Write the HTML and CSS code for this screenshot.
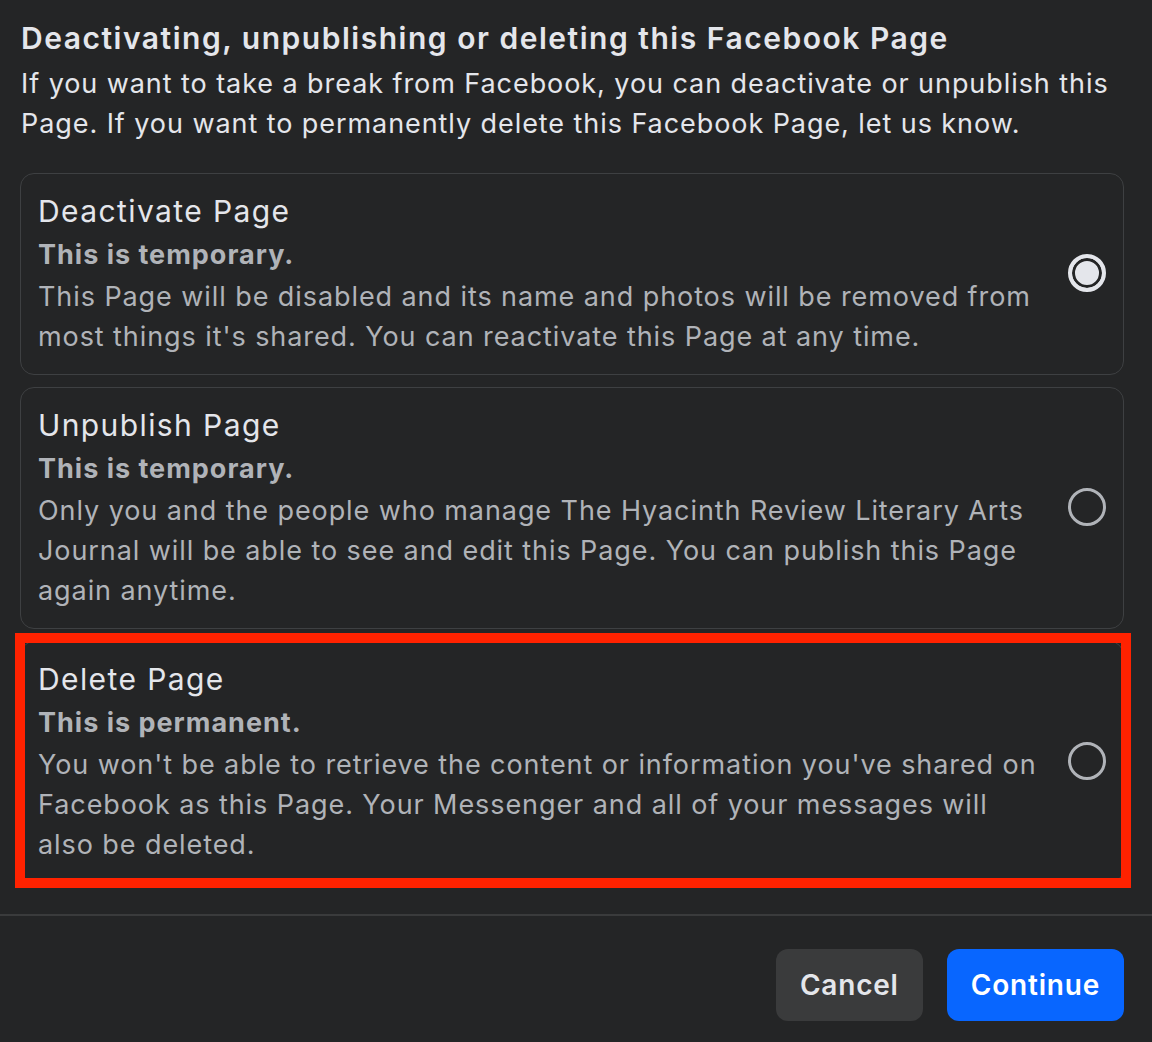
FILE: index.html
```html
<!DOCTYPE html>
<html lang="en">
<head>
<meta charset="utf-8">
<title>Deactivating, unpublishing or deleting this Facebook Page</title>
<link rel="stylesheet" href="styles.css">
</head>
<body>
<div class="dialog">
  <div class="content">
    <h1 class="heading">Deactivating, unpublishing or deleting this Facebook Page</h1>
    <p class="intro">If you want to take a break from Facebook, you can deactivate or unpublish this Page. If you want to permanently delete this Facebook Page, let us know.</p>
    <div class="options">
      <div class="option">
        <div class="option-text">
          <div class="option-title">Deactivate Page</div>
          <div class="option-sub">This is temporary.</div>
          <div class="option-desc">This Page will be disabled and its name and photos will be removed from most things it's shared. You can reactivate this Page at any time.</div>
        </div>
        <span class="radio radio-on"></span>
      </div>
      <div class="option">
        <div class="option-text">
          <div class="option-title">Unpublish Page</div>
          <div class="option-sub">This is temporary.</div>
          <div class="option-desc">Only you and the people who manage The Hyacinth Review Literary Arts Journal will be able to see and edit this Page. You can publish this Page again anytime.</div>
        </div>
        <span class="radio"></span>
      </div>
      <div class="option option-marked">
        <div class="option-text">
          <div class="option-title">Delete Page</div>
          <div class="option-sub">This is permanent.</div>
          <div class="option-desc">You won't be able to retrieve the content or information you've shared on Facebook as this Page. Your Messenger and all of your messages will also be deleted.</div>
        </div>
        <span class="radio"></span>
      </div>
    </div>
  </div>
  <div class="footer">
    <button class="btn btn-cancel">Cancel</button>
    <button class="btn btn-continue">Continue</button>
  </div>
</div>
</body>
</html>
```

FILE: styles.css
```css
html, body {
  margin: 0;
  padding: 0;
  background: #242526;
}
body {
  font-family: Inter, "Open Sans", "Liberation Sans", sans-serif;
  color: #e4e6eb;
  width: 1152px;
  height: 1042px;
  overflow: hidden;
}
.dialog {
  display: flex;
  flex-direction: column;
}
.content {
  padding: 18px 28px 31px 21px;
}
.heading {
  margin: 0;
  font-size: 30px;
  line-height: 40px;
  font-weight: 600;
  letter-spacing: 1.52px;
  color: #e4e6eb;
}
.intro {
  margin: 6px 0 0;
  font-size: 27px;
  line-height: 40px;
  letter-spacing: 0.93px;
  color: #e4e6eb;
}
.options {
  margin-top: 29px;
  margin-left: -1px;
  display: flex;
  flex-direction: column;
  gap: 12px;
}
.option {
  position: relative;
  display: flex;
  align-items: center;
  gap: 20px;
  border: 1px solid #3e4042;
  border-radius: 14px;
  padding: 15px 17px 17px 17px;
}
.option-text {
  flex: 1;
}
.option-title {
  font-size: 30px;
  line-height: 44px;
  letter-spacing: 1.4px;
  color: #e4e6eb;
}
.option-sub {
  font-size: 27px;
  line-height: 44px;
  font-weight: 700;
  letter-spacing: 1px;
  color: #b0b3b8;
}
.option-desc {
  font-size: 27px;
  line-height: 40px;
  letter-spacing: 0.92px;
  color: #b0b3b8;
}
.radio {
  flex: none;
  width: 32px;
  height: 32px;
  border: 3px solid #b0b3b8;
  border-radius: 50%;
  box-sizing: content-box;
}
.radio-on {
  width: 30px;
  height: 30px;
  border: 4px solid #e4e6eb;
  background: #e4e6eb;
  box-shadow: inset 0 0 0 3px #242526;
}
.option-marked::after {
  content: "";
  position: absolute;
  top: -9px;
  left: -6px;
  right: -8px;
  bottom: -6px;
  border: 10px solid #ff2200;
  pointer-events: none;
}
.footer {
  border-top: 2px solid #3a3b3c;
  display: flex;
  justify-content: flex-end;
  gap: 24px;
  padding: 33px 28px 0 0;
}
.btn {
  font-family: inherit;
  font-size: 28px;
  font-weight: 600;
  letter-spacing: 0.8px;
  height: 72px;
  border: none;
  border-radius: 12px;
  padding: 0 24px;
  cursor: pointer;
}
.btn-cancel {
  background: #3a3b3c;
  color: #e4e6eb;
}
.btn-continue {
  background: #0866ff;
  color: #ffffff;
}
```
